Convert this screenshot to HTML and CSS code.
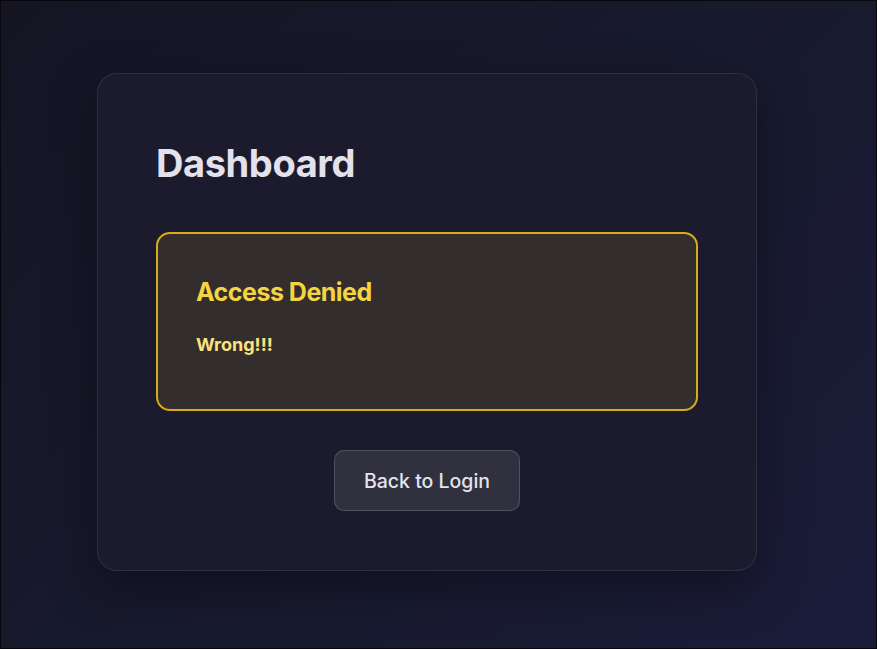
FILE: index.html
```html
<!DOCTYPE html>
<html lang="en">
<head>
<meta charset="utf-8">
<title>Dashboard</title>
<link rel="stylesheet" href="styles.css">
</head>
<body>
<div class="frame">
  <main class="card">
    <h1 class="title">Dashboard</h1>
    <section class="alert">
      <h2 class="alert-title">Access Denied</h2>
      <p class="alert-text">Wrong!!!</p>
    </section>
    <div class="actions">
      <button class="btn" type="button">Back to Login</button>
    </div>
  </main>
</div>
</body>
</html>
```
FILE: styles.css
```css
* { box-sizing: border-box; }
html, body { margin: 0; padding: 0; }
body {
  font-family: Inter, "Noto Sans", sans-serif;
  background: #0b0b14;
}
.frame {
  width: 877px;
  height: 649px;
  border: 1px solid #07070d;
  background: linear-gradient(135deg, #151524 0%, #181a2e 55%, #1b1c3a 100%);
  padding: 72px 0 0 96px;
  overflow: hidden;
}
.card {
  width: 660px;
  height: 498px;
  background: #1c1b2e;
  border: 1px solid rgba(255, 255, 255, 0.09);
  border-radius: 20px;
  box-shadow: 0 18px 50px rgba(0, 0, 0, 0.35);
  padding: 65px 58px 58px;
  display: flex;
  flex-direction: column;
}
.title {
  margin: 0;
  font-size: 38px;
  line-height: 48px;
  font-weight: 700;
  color: #e3e2ec;
  letter-spacing: -0.4px;
}
.alert {
  margin-top: 45px;
  height: 179px;
  border: 2px solid #d9ab17;
  border-radius: 14px;
  background: #332d2e;
  padding: 43px 38px 0;
}
.alert-title {
  margin: 0;
  font-size: 25px;
  line-height: 30px;
  font-weight: 700;
  color: #f5d443;
  letter-spacing: -0.5px;
}
.alert-text {
  margin: 27px 0 0;
  font-size: 18px;
  line-height: 22px;
  font-weight: 700;
  color: #fbe37e;
}
.actions {
  margin-top: 39px;
  display: flex;
  justify-content: center;
}
.btn {
  width: 186px;
  height: 61px;
  border-radius: 10px;
  background: #30303f;
  border: 1px solid rgba(255, 255, 255, 0.16);
  color: #e4e3ee;
  font-family: inherit;
  font-size: 19.5px;
  font-weight: 500;
  padding: 0;
}
```
